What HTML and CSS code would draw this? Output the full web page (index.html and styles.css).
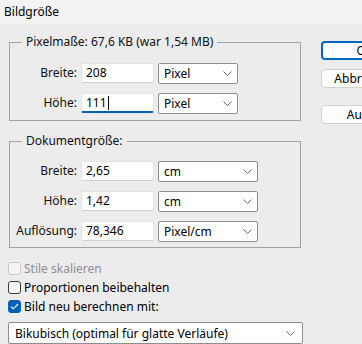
FILE: index.html
```html
<!DOCTYPE html>
<html lang="de">
<head>
<meta charset="utf-8">
<title>Bildgröße</title>
<link rel="stylesheet" href="styles.css">
</head>
<body>
<div class="window">
  <div class="titlebar">Bildgröße</div>
  <div class="content">
    <div class="main">
      <fieldset class="group g1">
        <legend>Pixelmaße: 67,6 KB (war 1,54 MB)</legend>
        <div class="grid">
          <span class="lbl">Breite:</span>
          <div class="input">208</div>
          <div class="select">Pixel<svg class="chev" width="9" height="5" viewBox="0 0 9 5"><path d="M0.5 0.5 L4.5 4.5 L8.5 0.5" fill="none" stroke="#6a6a6a" stroke-width="1"/></svg></div>
          <span class="lbl">Höhe:</span>
          <div class="input focus">111<span class="caret"></span></div>
          <div class="select">Pixel<svg class="chev" width="9" height="5" viewBox="0 0 9 5"><path d="M0.5 0.5 L4.5 4.5 L8.5 0.5" fill="none" stroke="#6a6a6a" stroke-width="1"/></svg></div>
        </div>
      </fieldset>
      <fieldset class="group g2">
        <legend>Dokumentgröße:</legend>
        <div class="grid">
          <span class="lbl">Breite:</span>
          <div class="input">2,65</div>
          <div class="select">cm<svg class="chev" width="9" height="5" viewBox="0 0 9 5"><path d="M0.5 0.5 L4.5 4.5 L8.5 0.5" fill="none" stroke="#6a6a6a" stroke-width="1"/></svg></div>
          <span class="lbl">Höhe:</span>
          <div class="input">1,42</div>
          <div class="select">cm<svg class="chev" width="9" height="5" viewBox="0 0 9 5"><path d="M0.5 0.5 L4.5 4.5 L8.5 0.5" fill="none" stroke="#6a6a6a" stroke-width="1"/></svg></div>
          <span class="lbl">Auflösung:</span>
          <div class="input">78,346</div>
          <div class="select">Pixel/cm<svg class="chev" width="9" height="5" viewBox="0 0 9 5"><path d="M0.5 0.5 L4.5 4.5 L8.5 0.5" fill="none" stroke="#6a6a6a" stroke-width="1"/></svg></div>
        </div>
      </fieldset>
      <div class="checks">
        <div class="check disabled"><span class="box"></span>Stile skalieren</div>
        <div class="check"><span class="box"></span>Proportionen beibehalten</div>
        <div class="check checked"><span class="box"><svg width="9" height="7" viewBox="0 0 9 7"><path d="M1 3.6 L3.3 5.8 L8 1" fill="none" stroke="#fff" stroke-width="1.1"/></svg></span>Bild neu berechnen mit:</div>
      </div>
      <div class="select wide">Bikubisch (optimal für glatte Verläufe)<svg class="chev" width="9" height="5" viewBox="0 0 9 5"><path d="M0.5 0.5 L4.5 4.5 L8.5 0.5" fill="none" stroke="#6a6a6a" stroke-width="1"/></svg></div>
    </div>
    <div class="buttons">
      <div class="btn default">OK</div>
      <div class="btn">Abbrechen</div>
      <div class="btn auto">Auto...</div>
    </div>
  </div>
</div>
</body>
</html>
```

FILE: styles.css
```css
* { box-sizing: border-box; }
html, body {
  margin: 0;
  padding: 0;
  width: 362px;
  height: 344px;
  overflow: hidden;
  background: #ececec;
  font-family: "Noto Sans", "DejaVu Sans", sans-serif;
  font-size: 12px;
  color: #111;
}
.titlebar {
  height: 24px;
  line-height: 23px;
  padding-left: 4px;
  background: #f3f3f3;
  color: #000;
}
.content {
  display: flex;
  align-items: flex-start;
  width: 420px;
}
.main {
  width: 301px;
  padding-left: 9px;
  padding-top: 10px;
  flex: none;
}
.group {
  margin: 0;
  border: 1px solid #a3a3a3;
  padding: 0;
  min-width: 0;
}
.group legend {
  margin-left: 12px;
  padding: 0 4px;
  line-height: 16px;
  height: 16px;
}
.g1 { padding-top: 13px; padding-bottom: 6px; }
.g2 { margin-top: 12px; padding-top: 12px; padding-bottom: 5px; }
.grid {
  display: grid;
  column-gap: 4px;
  row-gap: 9px;
  align-items: start;
}
.g1 .grid { grid-template-columns: 67px 68px 85px; }
.g2 .grid { grid-template-columns: 67px 68px 105px; }
.grid .input { margin-right: -5px; }
.grid .select { margin-left: 5px; }
.lbl {
  text-align: right;
  line-height: 20px;
  height: 20px;
}
.input {
  height: 20px;
  line-height: 18px;
  background: #fff;
  border: 1px solid #e3e3e3;
  border-bottom-color: #cfcfcf;
  border-radius: 2px;
  padding-left: 4px;
  color: #000;
}
.input.focus {
  border-bottom: 2px solid #005fb8;
}
.caret {
  display: inline-block;
  width: 1px;
  height: 14px;
  background: #000;
  vertical-align: -3px;
  margin-left: 1px;
}
.select {
  height: 21px;
  line-height: 19px;
  background: #fff;
  border: 1px solid #8e8e8e;
  border-radius: 2px;
  padding-left: 5px;
  padding-right: 5px;
  display: flex;
  align-items: center;
  justify-content: space-between;
  color: #000;
}
.chev { flex: none; }
.checks {
  margin-top: 14px;
  display: flex;
  flex-direction: column;
  gap: 6px;
}
.check {
  display: flex;
  align-items: center;
  height: 13px;
  line-height: 13px;
  margin-left: -1px;
  color: #000;
}
.box {
  width: 13px;
  height: 13px;
  border: 1px solid #3a3a3a;
  border-radius: 3px;
  margin-right: 3px;
  background: #f7f7f7;
  display: flex;
  align-items: center;
  justify-content: center;
  flex: none;
}
.check.disabled { color: #8c8c8c; }
.check.disabled .box { border-color: #c8c8c8; background: #f5f5f5; }
.check.checked .box { background: #005fb8; border-color: #005fb8; }
.select.wide {
  margin-top: 9px;
  margin-left: -1px;
  width: 295px;
  height: 22px;
  padding-left: 6px;
  padding-right: 7px;
}
.buttons {
  margin-left: 20px;
  padding-top: 17px;
  display: flex;
  flex-direction: column;
  width: 88px;
  flex: none;
}
.btn {
  height: 19px;
  line-height: 17px;
  text-align: center;
  background: #fdfdfd;
  border: 1px solid #d0d0d0;
  border-radius: 4px;
  color: #000;
}
.btn.default {
  border: 2px solid #0067c0;
  line-height: 15px;
}
.btn + .btn { margin-top: 9px; }
.btn.auto { margin-top: 17px; }
```
